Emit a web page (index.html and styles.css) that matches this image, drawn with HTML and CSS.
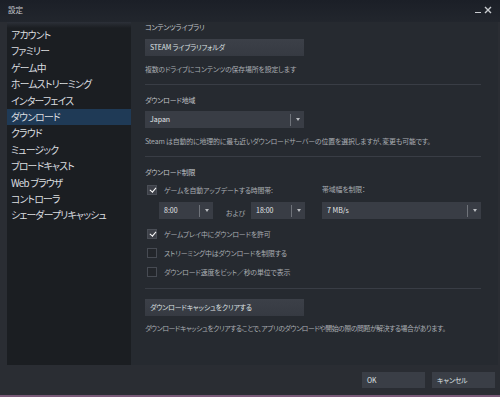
FILE: index.html
```html
<!DOCTYPE html>
<html lang="ja">
<head>
    <meta charset="UTF-8">
    <title>設定</title>
    <link rel="stylesheet" href="styles.css">
</head>
<body>
    <div class="window">
        <div class="titlebar">
            <span class="title">設定</span>
            <div class="controls">
                <span class="minimize"></span>
                <svg class="close" width="8" height="8" viewBox="0 0 8 8">
                    <path d="M1 1 L7 7 M7 1 L1 7" stroke="#c9ccd0" stroke-width="1.4"/>
                </svg>
            </div>
        </div>

        <div class="main">
            <ul class="sidebar">
                <li>アカウント</li>
                <li>ファミリー</li>
                <li>ゲーム中</li>
                <li>ホームストリーミング</li>
                <li>インターフェイス</li>
                <li class="active">ダウンロード</li>
                <li>クラウド</li>
                <li>ミュージック</li>
                <li>ブロードキャスト</li>
                <li>Web ブラウザ</li>
                <li>コントローラ</li>
                <li>シェーダープリキャッシュ</li>
            </ul>

            <div class="panel">
                <p class="label first">コンテンツライブラリ</p>
                <div class="button wide gap-7">STEAM ライブラリフォルダ</div>
                <p class="desc gap-8">複数のドライブにコンテンツの保存場所を設定します</p>
                <div class="divider"></div>

                <p class="label">ダウンロード地域</p>
                <div class="dropdown wide gap-6"><span>Japan</span><i class="arrow"></i></div>
                <p class="desc gap-8">Steam は自動的に地理的に最も近いダウンロードサーバーの位置を選択しますが、変更も可能です。</p>
                <div class="divider"></div>

                <p class="label">ダウンロード制限</p>
                <div class="limits">
                    <label class="check checked"><span class="box"></span>ゲームを自動アップデートする時間帯:</label>
                    <p class="desc">帯域幅を制限：</p>
                    <div class="times">
                        <div class="dropdown small"><span>8:00</span><i class="arrow"></i></div>
                        <span class="and">および</span>
                        <div class="dropdown small"><span>18:00</span><i class="arrow"></i></div>
                    </div>
                    <div class="dropdown wide"><span>7 MB/s</span><i class="arrow"></i></div>
                </div>

                <label class="check checked row-1"><span class="box"></span>ゲームプレイ中にダウンロードを許可</label>
                <label class="check row"><span class="box"></span>ストリーミング中はダウンロードを制限する</label>
                <label class="check row"><span class="box"></span>ダウンロード速度をビット／秒の単位で表示</label>
                <div class="divider last"></div>

                <div class="button wide gap-10">ダウンロードキャッシュをクリアする</div>
                <p class="desc tight gap-7">ダウンロードキャッシュをクリアすることで、アプリのダウンロードや開始の際の問題が解決する場合があります。</p>
            </div>
        </div>

        <div class="footer">
            <div class="button action">OK</div>
            <div class="button action">キャンセル</div>
        </div>
    </div>
</body>
</html>
```

FILE: styles.css
```css
body {
    margin: 0;
    background-color: #2a2d33;
    font-family: "Noto Sans CJK JP", "Noto Sans", sans-serif;
    font-feature-settings: "palt";
    overflow: hidden;
}
.window {
    width: 500px;
    height: 397px;
    display: flex;
    flex-direction: column;
    border-bottom: 2px solid #7a5a78;
    box-sizing: border-box;
}
.titlebar {
    height: 22px;
    flex: none;
    display: flex;
    justify-content: space-between;
    align-items: flex-start;
    background: linear-gradient(#1b1f27, #22262d);
}
.title {
    font-size: 7.5px;
    line-height: 8px;
    color: #c3c6ca;
    margin: 6px 0 0 8px;
}
.controls {
    display: flex;
    align-items: flex-start;
    gap: 3px;
    margin: 6px 8px 0 0;
}
.minimize {
    width: 6px;
    height: 1px;
    margin-top: 6px;
    background-color: #c9ccd0;
}
.main {
    flex: 1;
    display: flex;
    padding-left: 7px;
    padding-right: 2px;
}
.sidebar {
    list-style: none;
    margin: 0;
    padding: 5px 0 0 0;
    width: 124px;
    flex: none;
    background: linear-gradient(#2c3038, #1b1e22 6px);
}
.sidebar li {
    height: 16.4px;
    line-height: 16.4px;
    padding-left: 4px;
    font-size: 9.8px;
    letter-spacing: -0.75px;
    color: #dcdee0;
    white-space: nowrap;
}
.sidebar li.active {
    background-color: #1f3a56;
}
.panel {
    flex: 1;
    background-color: #262a30;
    padding: 0 16px 0 14px;
}
p {
    margin: 0;
}
.label, .desc {
    height: 10px;
    line-height: 10px;
    font-size: 6.9px;
    letter-spacing: -0.15px;
    white-space: nowrap;
}
.label {
    color: #c3c6ca;
    margin-top: 10px;
}
.label.first {
    margin-top: 0;
}
.desc {
    color: #a9adb2;
}
.desc.tight {
    letter-spacing: -0.45px;
}
.gap-6 { margin-top: 6px; }
.gap-7 { margin-top: 7px; }
.gap-8 { margin-top: 8px; }
.gap-10 { margin-top: 10px; }
.divider {
    height: 1px;
    margin-top: 10px;
    width: 336px;
    background-color: #393d45;
}
.divider.last {
    margin-top: 11px;
}
.button {
    height: 17px;
    line-height: 17px;
    padding-left: 5px;
    box-sizing: border-box;
    font-size: 6.9px;
    letter-spacing: -0.15px;
    color: #dfe1e3;
    background: linear-gradient(#3c4048, #363a42);
    white-space: nowrap;
}
.wide {
    width: 159px;
}
.dropdown {
    position: relative;
    height: 17px;
    line-height: 17px;
    padding-left: 5px;
    box-sizing: border-box;
    font-size: 7px;
    color: #e4e6e8;
    background-color: #393d45;
}
.dropdown::after {
    content: "";
    position: absolute;
    right: 13px;
    top: 3px;
    width: 1px;
    height: 12px;
    background-color: #6f737a;
}
.arrow {
    position: absolute;
    right: 4px;
    top: 7px;
    width: 0;
    height: 0;
    border-left: 2.5px solid transparent;
    border-right: 2.5px solid transparent;
    border-top: 3px solid #b9bcc0;
}
.dropdown.small {
    width: 54px;
}
.limits {
    display: grid;
    grid-template-columns: 177px 159px;
    row-gap: 7px;
    margin-top: 7px;
}
.limits .desc {
    line-height: 11px;
    height: 11px;
}
.times {
    display: flex;
    align-items: center;
    padding-left: 14px;
}
.and {
    font-size: 6.9px;
    color: #a9adb2;
    margin: 4px 0 0 13px;
    width: 25px;
}
.check {
    display: flex;
    align-items: center;
    height: 11px;
    padding-left: 2px;
    font-size: 6.9px;
    letter-spacing: -0.15px;
    color: #a9adb2;
    white-space: nowrap;
}
.check .box {
    width: 8px;
    height: 8px;
    border: 1px solid #474b53;
    background-color: #23262b;
    margin-right: 7px;
    flex: none;
    position: relative;
}
.check.checked .box {
    background-color: #3d4048;
    border-color: #4a4e56;
}
.check.checked .box::after {
    content: "";
    position: absolute;
    left: 2.5px;
    top: 0.5px;
    width: 2.5px;
    height: 5px;
    border-right: 1.6px solid #ffffff;
    border-bottom: 1.6px solid #ffffff;
    transform: rotate(40deg);
}
.row-1 {
    margin-top: 9px;
}
.row {
    margin-top: 8px;
}
.footer {
    height: 30px;
    flex: none;
    display: flex;
    justify-content: flex-end;
    align-items: flex-start;
    gap: 7px;
    padding: 7px 5px 0 0;
    box-sizing: border-box;
}
.button.action {
    width: 63px;
    height: 16px;
    line-height: 16px;
    background: #3a3e46;
}
```
